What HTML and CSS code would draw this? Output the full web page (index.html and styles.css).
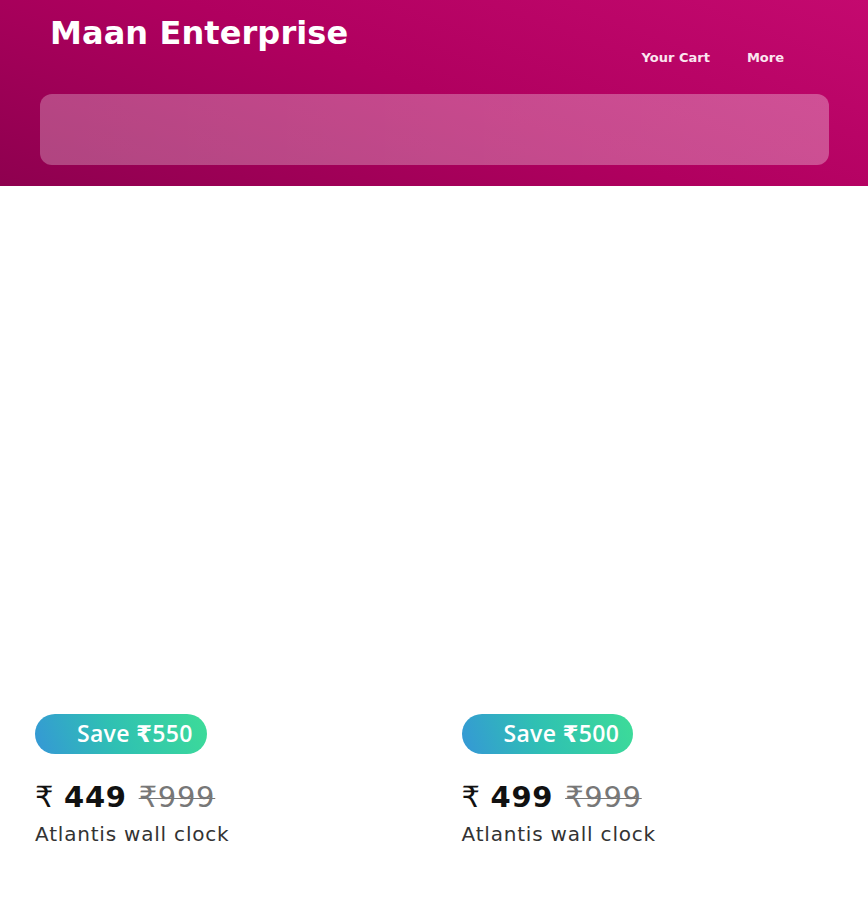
FILE: index.html
```html
<!DOCTYPE html>
<html>
<head>
<meta charset="utf-8">
<link rel="stylesheet" href="styles.css">
</head>
<body>
<header class="header">
  <div class="top">
    <h1 class="brand">Maan Enterprise</h1>
    <nav class="nav">
      <a class="nav-link">Your Cart</a>
      <a class="nav-link">More</a>
    </nav>
  </div>
  <div class="search"></div>
</header>
<main class="grid">
  <div class="card">
    <div class="image"></div>
    <div class="badge">Save ₹550</div>
    <div class="price"><span class="cur">₹</span> <span class="now">449</span> <span class="old">₹999</span></div>
    <div class="name">Atlantis wall clock</div>
  </div>
  <div class="card">
    <div class="image"></div>
    <div class="badge">Save ₹500</div>
    <div class="price"><span class="cur">₹</span> <span class="now">499</span> <span class="old">₹999</span></div>
    <div class="name">Atlantis wall clock</div>
  </div>
</main>
</body>
</html>
```
FILE: styles.css
```css
* { box-sizing: border-box; }
body {
  margin: 0;
  font-family: "DejaVu Sans", "Noto Sans", sans-serif;
  background: #fff;
}
.header {
  height: 186px;
  background: linear-gradient(200deg, #c4096f 0%, #b0005f 50%, #8e004f 100%);
  padding: 14px 39px 0 40px;
  display: flex;
  flex-direction: column;
}
.top {
  display: flex;
  justify-content: space-between;
  align-items: flex-start;
  height: 80px;
}
.brand {
  margin: 0 0 0 10px;
  color: #fff;
  font-size: 32px;
  font-weight: bold;
  letter-spacing: 0.1px;
}
.nav {
  display: flex;
  gap: 37px;
  margin-top: 36px;
  margin-right: 45px;
}
.nav-link {
  color: #fbe6f0;
  font-size: 13px;
  font-weight: bold;
}
.search {
  height: 71px;
  border-radius: 12px;
  background: linear-gradient(90deg, rgba(255,255,255,0.27), rgba(255,255,255,0.3));
}
.grid {
  display: grid;
  grid-template-columns: 1fr 1fr;
  column-gap: 55px;
  padding: 0 35px;
}
.image { height: 528px; }
.badge {
  display: inline-block;
  height: 40px;
  line-height: 38px;
  padding: 0 14px 0 42px;
  border-radius: 20px;
  background: linear-gradient(70deg, #3597d6 0%, #2fc0b3 45%, #3ddc98 100%);
  color: #fff;
  font-family: "Open Sans", "DejaVu Sans", sans-serif;
  font-size: 23px;
  font-weight: 600;
  letter-spacing: 0.3px;
}
.price {
  margin-top: 26px;
  font-size: 29px;
  color: #111;
  letter-spacing: 0.7px;
}
.cur { font-weight: normal; }
.now { font-weight: bold; }
.old {
  margin-left: 2px;
  color: #777;
  font-weight: normal;
  text-decoration: line-through;
  text-decoration-thickness: 1px;
}
.name {
  margin-top: 8px;
  font-size: 20px;
  color: #333;
  letter-spacing: 0.8px;
}
```
